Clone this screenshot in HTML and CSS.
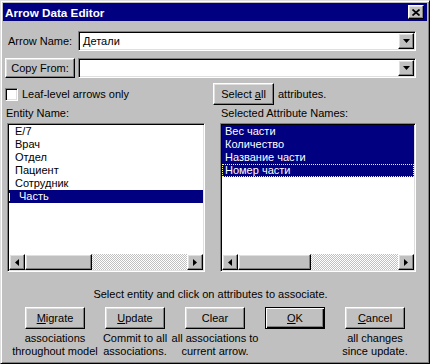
FILE: index.html
```html
<!DOCTYPE html>
<html>
<head>
    <meta charset="UTF-8">
    <meta name="viewport" content="width=device-width, initial-scale=1.0">
    <title>Arrow Data Editor</title>
    <link rel="stylesheet" href="styles.css">
</head>
<body>
    <div class="window">
        <div class="titlebar">
            <span class="title">Arrow Data Editor</span>
            <span class="close raised">
                <svg width="8" height="7" viewBox="0 0 8 7"><path d="M0.5 0.5L7.5 6.5M7.5 0.5L0.5 6.5" stroke="#000" stroke-width="1.7"/></svg>
            </span>
        </div>

        <div class="content">
            <div class="field-row name-row">
                <span class="label">Arrow Name:</span>
                <div class="combo sunken">
                    <span class="combo-text">Детали</span>
                    <span class="drop raised"><svg width="7" height="4" viewBox="0 0 7 4"><path d="M0 0h7L3.5 4z"/></svg></span>
                </div>
            </div>

            <div class="field-row copy-row">
                <span class="btn raised copy-btn"><span>Copy From:</span></span>
                <div class="combo sunken">
                    <span class="combo-text"></span>
                    <span class="drop raised"><svg width="7" height="4" viewBox="0 0 7 4"><path d="M0 0h7L3.5 4z"/></svg></span>
                </div>
            </div>

            <div class="pane">
                <div class="leaf"><span class="check sunken"></span>Leaf-level arrows only</div>
                <div class="select-all"><span class="btn raised sel-btn"><span>Select <u>a</u>ll</span></span>attributes.</div>

                <div class="cap cap-left">Entity Name:</div>
                <div class="cap cap-right">Selected Attribute Names:</div>

                <div class="listbox sunken list-left">
                    <div class="items">
                        <div class="item">E/7</div>
                        <div class="item">Врач</div>
                        <div class="item">Отдел</div>
                        <div class="item">Пациент</div>
                        <div class="item">Сотрудник</div>
                        <div class="item sel"><span class="ibeam"></span>Часть</div>
                    </div>
                    <div class="hscroll">
                        <span class="arrow raised"><svg width="4" height="7" viewBox="0 0 4 7"><path d="M4 0v7L0 3.5z"/></svg></span>
                        <span class="thumb raised left-thumb"></span>
                        <span class="track"></span>
                        <span class="arrow raised"><svg width="4" height="7" viewBox="0 0 4 7"><path d="M0 0v7L4 3.5z"/></svg></span>
                    </div>
                </div>

                <div class="listbox sunken list-right">
                    <div class="items">
                        <div class="item sel">Вес части</div>
                        <div class="item sel">Количество</div>
                        <div class="item sel">Название части</div>
                        <div class="item sel focus">Номер части</div>
                    </div>
                    <div class="hscroll">
                        <span class="arrow raised"><svg width="4" height="7" viewBox="0 0 4 7"><path d="M4 0v7L0 3.5z"/></svg></span>
                        <span class="thumb raised right-thumb"></span>
                        <span class="track"></span>
                        <span class="arrow raised"><svg width="4" height="7" viewBox="0 0 4 7"><path d="M0 0v7L4 3.5z"/></svg></span>
                    </div>
                </div>
            </div>

            <div class="hint">Select entity and click on attributes to associate.</div>

            <div class="actions">
                <div class="action">
                    <span class="btn raised act-btn"><span><u>M</u>igrate</span></span>
                    <div class="note">associations<br>throughout model</div>
                </div>
                <div class="action">
                    <span class="btn raised act-btn"><span><u>U</u>pdate</span></span>
                    <div class="note">Commit to all<br>associations.</div>
                </div>
                <div class="action">
                    <span class="btn raised act-btn"><span>Clear</span></span>
                    <div class="note">all associations to<br>current arrow.</div>
                </div>
                <div class="action">
                    <span class="btn default act-btn"><span><u>O</u>K</span></span>
                </div>
                <div class="action">
                    <span class="btn raised act-btn"><span><u>C</u>ancel</span></span>
                    <div class="note">all changes<br>since update.</div>
                </div>
            </div>
        </div>
    </div>
</body>
</html>
```

FILE: styles.css
```css
body {
    margin: 0;
    padding: 0;
    background-color: #c0c0c0;
    font-family: "Liberation Sans", Arial, sans-serif;
    font-size: 11px;
    line-height: 13px;
    color: #000;
}

.window {
    box-sizing: border-box;
    width: 430px;
    height: 364px;
    padding: 2px;
    border: 1px solid;
    border-color: #dfdfdf #000 #000 #dfdfdf;
    box-shadow: inset 1px 1px #fff, inset -1px -1px #808080;
    background: #c0c0c0;
}

/* bevels */
.raised {
    box-sizing: border-box;
    background: #c0c0c0;
    border: 1px solid;
    border-color: #fff #000 #000 #fff;
    box-shadow: inset -1px -1px #808080, inset 1px 1px #dfdfdf;
}

.sunken {
    box-sizing: border-box;
    background: #fff;
    border: 1px solid;
    border-color: #808080 #fff #fff #808080;
    padding: 1px;
    box-shadow: inset 1px 1px #000, inset -1px -1px #dfdfdf;
}

.titlebar {
    height: 18px;
    background: #000080;
    display: flex;
    align-items: center;
    justify-content: space-between;
    padding: 0 3px 0 2px;
}

.title {
    color: #fff;
    font-weight: bold;
    font-size: 11.7px;
}

.close {
    width: 16px;
    height: 14px;
    display: flex;
    align-items: center;
    justify-content: center;
}

.content {
    padding: 0 11px 0 2px;
}

.field-row {
    display: flex;
    align-items: center;
    height: 20px;
}

.name-row {
    margin-top: 10px;
}

.copy-row {
    margin-top: 7px;
}

.label {
    width: 73px;
    padding-left: 3px;
    box-sizing: border-box;
}

.combo {
    flex: 1;
    height: 20px;
    display: flex;
}

.copy-row .combo {
    margin-left: 3px;
}

.combo-text {
    flex: 1;
    padding-left: 3px;
    line-height: 16px;
}

.drop {
    width: 16px;
    height: 16px;
    display: flex;
    align-items: center;
    justify-content: center;
}

.btn {
    display: inline-flex;
    align-items: center;
    justify-content: center;
    white-space: nowrap;
}

.copy-btn {
    width: 70px;
    height: 20px;
}

.pane {
    margin-top: 5px;
    display: grid;
    grid-template-columns: 208px 203px;
    grid-template-rows: 22px 18px 149px;
}

.leaf {
    display: flex;
    align-items: center;
}

.check {
    width: 13px;
    height: 13px;
    margin-right: 4px;
}

.select-all {
    display: flex;
    align-items: center;
}

.sel-btn {
    width: 61px;
    height: 22px;
    margin-right: 4px;
}

.cap {
    padding-top: 2px;
}

.cap-left {
    padding-left: 1px;
}

.cap-right {
    padding-left: 8px;
}

.listbox {
    display: flex;
    flex-direction: column;
    height: 149px;
}

.list-left {
    width: 198px;
    margin-left: 2px;
}

.list-right {
    width: 196px;
    margin-left: 7px;
}

.items {
    flex: 1;
}

.item {
    height: 13px;
    white-space: nowrap;
}

.list-left .item {
    padding-left: 6px;
}

.list-right .item {
    padding-left: 3px;
}

.item.sel {
    background: #000080;
    color: #fff;
}

.list-left .item.sel {
    padding-left: 0;
    display: flex;
    align-items: center;
}

.ibeam {
    width: 1px;
    height: 8px;
    background: #fff;
    margin-right: 9px;
}

.item.focus {
    outline: 1px dotted #ffff80;
    outline-offset: -1px;
}

.hscroll {
    display: flex;
    height: 16px;
}

.arrow {
    width: 16px;
    height: 16px;
    display: flex;
    align-items: center;
    justify-content: center;
}

.thumb {
    height: 16px;
}

.left-thumb {
    width: 67px;
}

.right-thumb {
    width: 73px;
}

.track {
    flex: 1;
    background-image: conic-gradient(#fff 25%, #c0c0c0 0 50%, #fff 0 75%, #c0c0c0 0);
    background-size: 2px 2px;
}

.hint {
    margin-top: 16px;
    text-align: center;
}

.actions {
    margin-top: 6px;
    padding-left: 20px;
    display: flex;
    gap: 20px;
}

.action {
    width: 60px;
    display: flex;
    flex-direction: column;
    align-items: center;
}

.act-btn {
    width: 60px;
    height: 22px;
}

.btn.default {
    box-sizing: border-box;
    background: #c0c0c0;
    border: 1px solid #000;
    box-shadow: inset 1px 1px #fff, inset -1px -1px #000, inset -2px -2px #808080;
}

.note {
    margin-top: 3px;
    text-align: center;
    white-space: nowrap;
}
```
